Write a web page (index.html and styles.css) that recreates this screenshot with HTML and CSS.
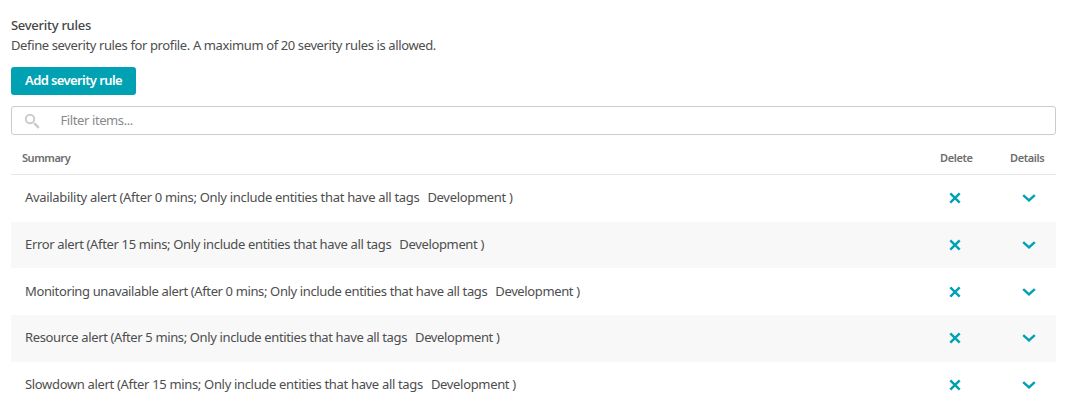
FILE: index.html
```html
<!DOCTYPE html>
<html lang="en">
<head>
<meta charset="utf-8">
<title>Severity rules</title>
<link rel="stylesheet" href="styles.css">
</head>
<body>
<svg class="symbols" width="0" height="0">
  <symbol id="cross" viewBox="0 0 12 12"><path d="M1.3 1.3 10.7 10.7M10.7 1.3 1.3 10.7"/></symbol>
  <symbol id="chevron" viewBox="0 0 14 8"><path d="M1.2 1.2 7 6.4 12.8 1.2"/></symbol>
</svg>
<main class="panel">
  <h1 class="title">Severity rules</h1>
  <p class="intro">Define severity rules for profile. A maximum of 20 severity rules is allowed.</p>
  <button class="add">Add severity rule</button>
  <label class="filter">
    <svg class="search" viewBox="0 0 16 16"><circle cx="6" cy="6" r="4.2"/><path class="handle" d="M10.2 10.2 14.8 14.8"/></svg>
    <span class="placeholder">Filter items...</span>
  </label>
  <div class="head"><span class="summary">Summary</span><span class="delete">Delete</span><span class="details">Details</span></div>
  <div class="row"><span class="text availability">Availability alert (After 0 mins; Only include entities that have all tags <span class="tag">Development )</span></span><svg class="cross"><use href="#cross"/></svg><svg class="chevron"><use href="#chevron"/></svg></div>
  <div class="row"><span class="text error">Error alert (After 15 mins; Only include entities that have all tags <span class="tag">Development )</span></span><svg class="cross"><use href="#cross"/></svg><svg class="chevron"><use href="#chevron"/></svg></div>
  <div class="row"><span class="text">Monitoring unavailable alert (After 0 mins; Only include entities that have all tags <span class="tag">Development )</span></span><svg class="cross"><use href="#cross"/></svg><svg class="chevron"><use href="#chevron"/></svg></div>
  <div class="row"><span class="text">Resource alert (After 5 mins; Only include entities that have all tags <span class="tag">Development )</span></span><svg class="cross"><use href="#cross"/></svg><svg class="chevron"><use href="#chevron"/></svg></div>
  <div class="row"><span class="text slowdown">Slowdown alert (After 15 mins; Only include entities that have all tags <span class="tag">Development )</span></span><svg class="cross"><use href="#cross"/></svg><svg class="chevron"><use href="#chevron"/></svg></div>
</main>
</body>
</html>
```
FILE: styles.css
```css
* { box-sizing: border-box; }
body { margin: 0; background: #fff; color: #4d4e4e; font: 13px/20px "Noto Sans", "Open Sans", sans-serif; letter-spacing: -0.37px; overflow: hidden; }
.symbols { display: block; }
.panel { padding: 15px 24px 0 11px; white-space: nowrap; }
.title { margin: 0; color: #454646; font-size: 13px; font-weight: 500; line-height: 20px; letter-spacing: -0.28px; }
.intro { margin: 0 0 12px; letter-spacing: -0.38px; }
.add { display: block; width: 125px; height: 28px; padding: 0 0 2px; border: 0; border-radius: 3px; background: #00a1b2; color: #fff; font: 600 13px/26px "Noto Sans", "Open Sans", sans-serif; letter-spacing: -0.6px; }
.filter { display: flex; align-items: center; height: 29px; margin-top: 11px; padding-left: 12px; border: 1px solid #ccc; border-radius: 3px; color: #898989; }
.search { width: 16px; height: 16px; margin-right: 20px; fill: none; stroke: #ccc; stroke-width: 2; }
.handle { stroke-width: 2.6; }
.placeholder { padding: 0 0 1px 0.5px; letter-spacing: -0.4px; }
.head { display: flex; align-items: center; height: 40px; padding: 7px 11px 0; border-bottom: 1px solid #e6e6e6; color: #6d6d6d; font-size: 11px; font-weight: 600; letter-spacing: -0.45px; }
.summary { flex: 1; }
.delete { width: 70px; letter-spacing: -0.38px; }
.details { width: 35px; letter-spacing: -0.38px; }
.row { display: flex; align-items: center; height: 46.7px; padding: 0 20px 0 14px; }
.row:nth-child(odd) { background: #f8f8f8; }
.text { flex: 1; padding-bottom: 2px; }
.availability { letter-spacing: -0.31px; }
.error { letter-spacing: -0.35px; }
.slowdown { letter-spacing: -0.33px; }
.tag { margin-left: 5px; }
.cross, .chevron { fill: none; stroke: #00a1b2; stroke-width: 2.4; }
.cross { width: 12px; height: 12px; margin-right: 61px; }
.chevron { width: 14px; height: 8px; }
```
